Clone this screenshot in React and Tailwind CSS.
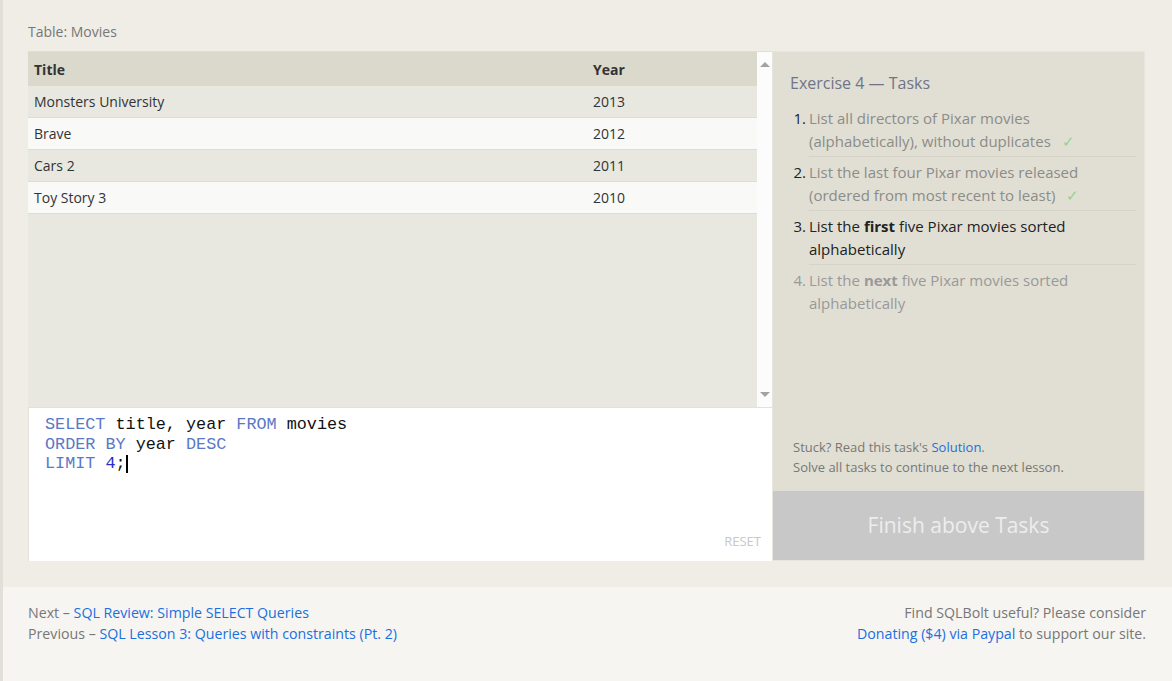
const movies = [
  { title: 'Monsters University', year: 2013 },
  { title: 'Brave', year: 2012 },
  { title: 'Cars 2', year: 2011 },
  { title: 'Toy Story 3', year: 2010 },
]

const tasks = [
  { n: 1, text: 'List all directors of Pixar movies (alphabetically), without duplicates', done: true },
  { n: 2, text: 'List the last four Pixar movies released (ordered from most recent to least)', done: true },
  { n: 3, pre: 'List the', bold: 'first', post: 'five Pixar movies sorted alphabetically', active: true },
  { n: 4, pre: 'List the', bold: 'next', post: 'five Pixar movies sorted alphabetically' },
]

export default function App() {
  return (
    <div className="font-['Open_Sans',sans-serif] text-[#333] border-l-[3px] border-[#e2dfd8]">
      {/* Ejercicio */}
      <div className="bg-[#efede6] pl-[25px] pr-[27px] pt-[22px] pb-[26px]">
        <div className="text-[14px] text-[#777] leading-[20px] mb-[9px]">Table: Movies</div>
        <div className="flex h-[510px]">
          {/* Tabla + editor */}
          <div className="flex flex-col w-[744px]">
            <div className="flex h-[356px] border-t border-[#e0ded5]">
              <div className="flex-1 bg-[#e9e8e0]">
                <div className="flex h-[34px] items-center bg-[#dad9cc] text-[14px] font-bold text-[#333]">
                  <div className="w-[565px] pl-[6px]">Title</div>
                  <div>Year</div>
                </div>
                {movies.map((m, i) => (
                  <div
                    key={m.title}
                    className={`flex h-[32px] items-center text-[14px] border-b border-[#dddcd5] ${i % 2 ? 'bg-[#f9f9f8]' : 'bg-[#e9e8e0]'}`}
                  >
                    <div className="w-[565px] pl-[6px]">{m.title}</div>
                    <div>{m.year}</div>
                  </div>
                ))}
              </div>
              <div className="w-[15px] bg-[#fcfcfc] flex flex-col justify-between items-center py-[10px]">
                <span className="w-0 h-0 border-x-[5px] border-x-transparent border-b-[5px] border-b-[#a3a3a3]" />
                <span className="w-0 h-0 border-x-[5px] border-x-transparent border-t-[5px] border-t-[#a3a3a3]" />
              </div>
            </div>
            <div className="flex-1 bg-white border-l border-t border-[#e3e1da] relative">
              <pre className="font-['Liberation_Mono',monospace] text-[16.8px] leading-[19.5px] text-[#111] pl-[16px] pt-[7px]">
                <span className="text-[#5a78c6]">SELECT</span> title, year <span className="text-[#5a78c6]">FROM</span> movies{'\n'}
                <span className="text-[#5a78c6]">ORDER BY</span> year <span className="text-[#5a78c6]">DESC</span>{'\n'}
                <span className="text-[#5a78c6]">LIMIT</span> <span className="text-[#2b2bd0]">4</span>;<span className="inline-block w-[2px] h-[18px] bg-black align-middle" />
              </pre>
              <div className="absolute right-[11px] bottom-[10px] text-[13px] text-[#c8c8c8]">RESET</div>
            </div>
          </div>

          {/* Tareas */}
          <div className="flex-1 flex flex-col bg-[#e1dfd4] border border-[#e7e5dc]">
            <div className="flex-1 pl-[17px] pr-[8px] pt-[20px]">
              <div className="text-[16px] text-[#6f7488] leading-[22px] mb-[13px]">Exercise 4 — Tasks</div>
              {tasks.map((t, i) => (
                <div key={t.n} className="flex text-[15px] leading-[22.5px]">
                  <div className={`w-[16px] text-right shrink-0 ${t.n === 4 ? 'text-[#999]' : 'text-[#222]'}`}>{t.n}.</div>
                  <div
                    className={`flex-1 ml-[3px] pb-[4px] mb-[4px] ${i < 3 ? 'border-b border-[#d6d4c9]' : ''} ${t.active ? 'text-[#222]' : t.done ? 'text-[#8c8c88]' : 'text-[#999]'}`}
                  >
                    {t.text ? (
                      <>
                        {t.text}
                        <span className="text-[#92d192] ml-[11px]">✓</span>
                      </>
                    ) : (
                      <>
                        {t.pre} <b className="font-bold">{t.bold}</b> {t.post}
                      </>
                    )}
                  </div>
                </div>
              ))}
            </div>
            <div className="pl-[20px] pb-[14px] text-[13px] leading-[20px] text-[#777]">
              <div>Stuck? Read this task's <span className="text-[#1b6fe0]">Solution</span>.</div>
              <div>Solve all tasks to continue to the next lesson.</div>
            </div>
            <div className="h-[69px] bg-[#c8c8c8] flex items-center justify-center text-[21px] text-[#ededed]">
              Finish above Tasks
            </div>
          </div>
        </div>
      </div>

      {/* Pie */}
      <div className="bg-[#f6f5f1] h-[94px] pl-[25px] pr-[26px] pt-[15px] flex justify-between text-[14.2px] leading-[21px] text-[#777]">
        <div>
          <div>Next – <span className="text-[#1b6fe0]">SQL Review: Simple SELECT Queries</span></div>
          <div>Previous – <span className="text-[#1b6fe0]">SQL Lesson 3: Queries with constraints (Pt. 2)</span></div>
        </div>
        <div className="text-right">
          <div>Find SQLBolt useful? Please consider</div>
          <div><span className="text-[#1b6fe0]">Donating ($4) via Paypal</span> to support our site.</div>
        </div>
      </div>
    </div>
  )
}
